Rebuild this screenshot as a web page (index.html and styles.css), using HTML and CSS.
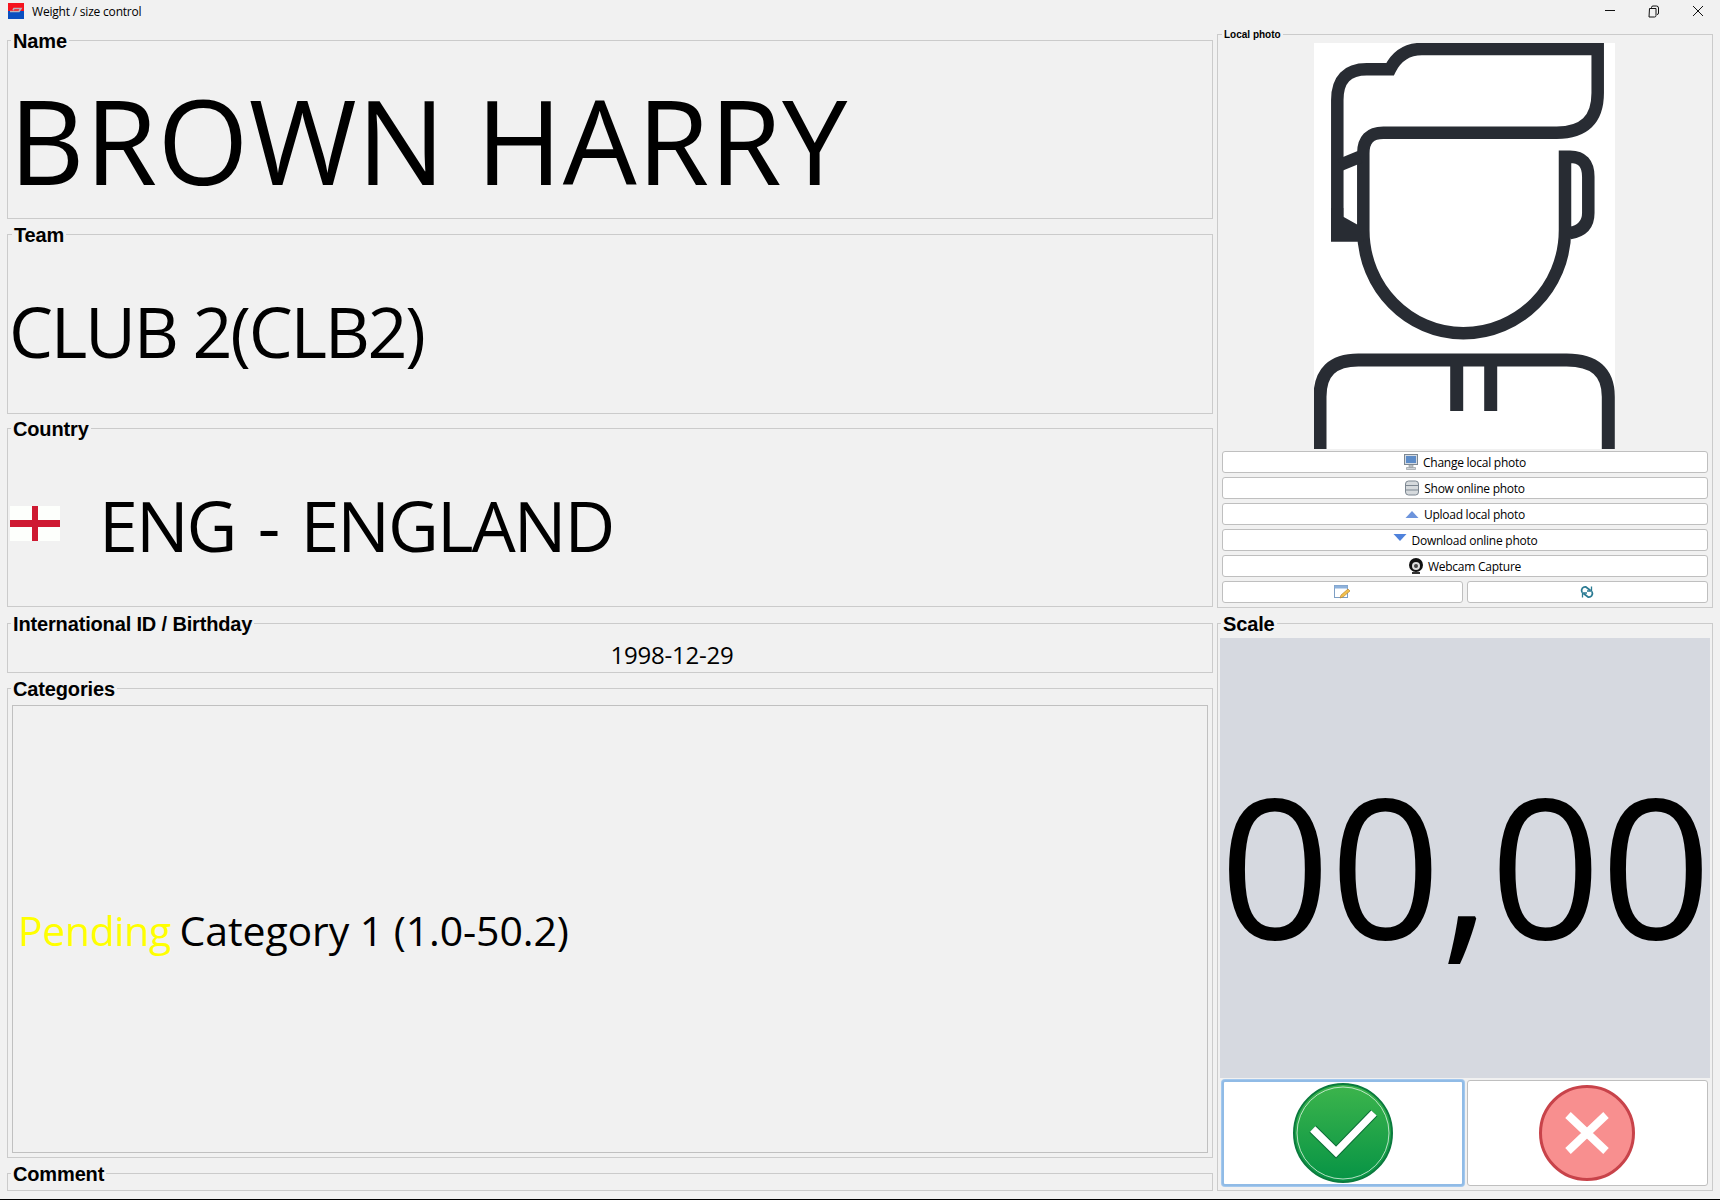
FILE: index.html
```html
<!DOCTYPE html>
<html lang="en">
<head>
    <meta charset="UTF-8" />
    <title>Weight / size control</title>
    <link rel="stylesheet" href="styles.css">
</head>
<body>
    <header class="title-bar">
        <svg class="app-icon" viewBox="0 0 16 16">
            <rect width="16" height="8" fill="#f5141e"/>
            <rect y="8" width="16" height="8" fill="#0b4fc0"/>
            <path d="M2 8.500h9l2-3H6L5 7" fill="none" stroke="#b9b4bd" stroke-width="1.600"/>
        </svg>
        <span class="title-text">Weight / size control</span>
        <div class="window-controls">
            <svg viewBox="0 0 44 30"><path d="M17 10.500h10" stroke="#111" fill="none"/></svg>
            <svg viewBox="0 0 44 30"><path d="M17.500 8.500h6.500v7a1.500 1.500 0 0 1-1.500 1.500h-5.500zM19.500 8.500v-1a1.500 1.500 0 0 1 1.500-1.500h3.500a2 2 0 0 1 2 2v5a1.500 1.500 0 0 1-1.500 1.500" stroke="#111" fill="none"/></svg>
            <svg viewBox="0 0 44 30"><path d="M17 6l10 10M27 6l-10 10" stroke="#111" fill="none"/></svg>
        </div>
    </header>

    <main class="content">
        <div class="left-column">
            <fieldset class="group group-name">
                <legend>Name</legend>
                <div class="big-name">BROWN HARRY</div>
            </fieldset>
            <fieldset class="group group-team">
                <legend class="team-legend">Team</legend>
                <div class="big-value team-value">CLUB 2(CLB2)</div>
            </fieldset>
            <fieldset class="group group-country">
                <legend>Country</legend>
                <svg class="flag" viewBox="0 0 50 35">
                    <rect width="50" height="35" fill="#fdfffc"/>
                    <rect x="22" width="6" height="35" fill="#ce1a32"/>
                    <rect y="14" width="50" height="7" fill="#ce1a32"/>
                </svg>
                <div class="big-value country-value">ENG - ENGLAND</div>
            </fieldset>
            <fieldset class="group group-birth">
                <legend>International ID / Birthday</legend>
                <div class="birth-date">1998-12-29</div>
            </fieldset>
            <fieldset class="group group-categories">
                <legend>Categories</legend>
                <div class="category-box">
                    <span class="pending">Pending</span>&nbsp;<span class="category-name">Category 1 (1.0-50.2)</span>
                </div>
            </fieldset>
            <fieldset class="group group-comment">
                <legend>Comment</legend>
            </fieldset>
        </div>

        <div class="right-column">
            <fieldset class="group group-photo">
                <legend class="small-legend">Local photo</legend>
                <svg class="photo" viewBox="0 0 301 406">
                    <rect width="301" height="406" fill="#fff"/>
                    <g fill="none" stroke="#282c33" stroke-width="12.500">
                        <path d="M23.300 198V57Q23.300 26.300 52.700 26.300H76Q86 6 108 6H283.700V50Q283.700 89.700 242.700 89.700H69.300Q49.300 89.700 49.300 110.300V187C49.300 245 95 290.300 149.300 290.300C205 290.300 251 245 251 187V113.700H256Q274.300 113.700 274.300 133.700V170Q274.300 187 256 190"/>
                        <path d="M26 122L46 113.700"/>
                        <path d="M6 406V353.700Q6 317 44.300 317H252.700Q294.300 317 294.300 353.700V406" stroke-width="13"/>
                        <path d="M142.700 317V368M176.700 317V368" stroke-width="13"/>
                    </g>
                    <path d="M17 198.700H50L44 182L29.300 173.700V165H17Z" fill="#282c33"/>
                </svg>
                <div class="photo-buttons">
                    <button class="btn">
                        <svg class="btn-icon" viewBox="0 0 14 16">
                            <rect x="0.500" y="0.500" width="13" height="10" fill="#d5dbe2" stroke="#7d8791"/>
                            <rect x="2" y="2" width="10" height="7" fill="#5d8cc8"/>
                            <path d="M5 11h4v2H5zM2.500 13.500h9v2h-9z" fill="#ced3d8" stroke="#8a9096" stroke-width=".6"/>
                        </svg>
                        Change local photo
                    </button>
                    <button class="btn">
                        <svg class="btn-icon" viewBox="0 0 14 16">
                            <rect x="0.500" y="1" width="13" height="14" rx="3" fill="#d6dadd" stroke="#7d8791"/>
                            <path d="M0.500 5.500h13M0.500 10h13" stroke="#7d8791"/>
                        </svg>
                        Show online photo
                    </button>
                    <button class="btn">
                        <svg class="btn-icon" viewBox="0 0 14 16"><path d="M0.500 12L7 5l6.500 7z" fill="#6d94dc"/></svg>
                        Upload local photo
                    </button>
                    <button class="btn">
                        <svg class="btn-icon btn-icon-high" viewBox="0 0 14 16"><path d="M0.500 4h13L7 11z" fill="#4f82dc"/></svg>
                        Download online photo
                    </button>
                    <button class="btn">
                        <svg class="btn-icon" viewBox="0 0 14 16">
                            <circle cx="7" cy="7" r="7" fill="#111"/>
                            <circle cx="7" cy="8" r="4" fill="#ddd"/>
                            <circle cx="7" cy="8" r="2" fill="#444"/>
                            <path d="M3 14h8v2H3z" fill="#333"/>
                        </svg>
                        Webcam Capture
                    </button>
                    <div class="btn-row">
                        <button class="btn">
                            <svg class="btn-icon" viewBox="0 0 16 16">
                                <rect x="0.500" y="1.500" width="13" height="12" fill="#fff" stroke="#7e9fc4"/>
                                <rect x="0.500" y="1.500" width="13" height="3" fill="#8eb2dc"/>
                                <path d="M6 14l1-3 7-6 2 2-7 6z" fill="#f2c04c" stroke="#b57d2a" stroke-width=".6"/>
                            </svg>
                        </button>
                        <button class="btn">
                            <svg class="btn-icon" viewBox="0 0 16 16" fill="none" stroke="#2a7a92" stroke-width="1.800">
                                <path d="M3 8.500C1.500 5 4 2.500 7 3l4.500 3.500M13 7.500c1.500 3.500-1 6-4 5.500L4.500 9.500"/>
                                <path d="M12.500 2.500V7H8M3.500 13.500V9H8" stroke-width="1.300"/>
                            </svg>
                        </button>
                    </div>
                </div>
            </fieldset>

            <fieldset class="group group-scale">
                <legend class="scale-legend">Scale</legend>
                <div class="scale-display">00,00</div>
                <div class="scale-buttons">
                    <button class="btn action-btn action-focus">
                        <svg class="action-icon" viewBox="0 0 100 100">
                            <defs>
                                <linearGradient id="okFill" x1="0" y1="0" x2="0" y2="1">
                                    <stop offset="0" stop-color="#3db54c"/>
                                    <stop offset="1" stop-color="#069345"/>
                                </linearGradient>
                            </defs>
                            <circle cx="50" cy="50" r="49" fill="url(#okFill)" stroke="#0b7a3e" stroke-width="2"/>
                            <circle cx="50" cy="50" r="46" fill="none" stroke="#dff2e3" stroke-width=".8"/>
                            <path d="M19.700 46L43 69L81 30" fill="none" stroke="#0c6f38" stroke-width="9.500"/>
                            <path d="M19.700 46L43 69L81 30" fill="none" stroke="#fff" stroke-width="7.500"/>
                        </svg>
                    </button>
                    <button class="btn action-btn">
                        <svg class="action-icon" viewBox="0 0 100 100">
                            <circle cx="50" cy="50" r="46.500" fill="#f88f8f" stroke="#c8434a" stroke-width="3"/>
                            <path d="M31 32L69 68M69 32L31 68" fill="none" stroke="#fff" stroke-width="8"/>
                        </svg>
                    </button>
                </div>
            </fieldset>
        </div>
    </main>
</body>
</html>
```

FILE: styles.css
```css
* {
    box-sizing: border-box;
}
body {
    margin: 0;
    height: 1200px;
    overflow: hidden;
    background: #f1f1f1;
    color: #000;
    font-family: 'Open Sans', 'Noto Sans', sans-serif;
    border-bottom: 1px solid #000;
}
.title-bar {
    display: flex;
    align-items: center;
    height: 29px;
    padding: 0 0 8px 8px;
    font-size: 12px;
}
.app-icon {
    width: 16px;
    height: 16px;
    margin-right: 8px;
}
.title-text {
    letter-spacing: -0.2px;
    margin-top: 2px;
}
.window-controls {
    display: flex;
    margin-left: auto;
}
.window-controls svg {
    width: 44px;
    height: 30px;
    margin-top: 8px;
}
.content {
    display: flex;
    gap: 4px;
    padding-left: 7px;
    padding-right: 7px;
    height: 1170px;
}
.left-column {
    width: 1206px;
    display: grid;
    grid-template-rows: 190px 191px 190px 61px 481px 29px;
    row-gap: 4px;
}
.right-column {
    width: 496px;
    display: flex;
    flex-direction: column;
}
.group {
    margin: 0;
    padding: 0;
    min-width: 0;
    border: 1px solid #cbcbcb;
    display: flex;
    align-items: center;
}
.group legend {
    margin-left: 3px;
    padding: 1px 2px 0;
    font-family: 'Liberation Sans', Arial, sans-serif;
    font-weight: bold;
    font-size: 20px;
    line-height: 22px;
    letter-spacing: -0.15px;
}
.group .team-legend {
    margin-left: 4px;
}
.group .scale-legend {
    margin-left: 1px;
}
.group .small-legend {
    margin-left: 0;
    padding: 0 2px;
    font-size: 10px;
    line-height: 11px;
    letter-spacing: 0;
}
.group-country {
    margin: -1px 0 1px;
}
.big-name {
    font-size: 117px;
    line-height: 1;
    padding: 8px 0 0 1px;
    letter-spacing: 0.3px;
}
.big-value {
    font-size: 70px;
    line-height: 1;
    padding-left: 2px;
    padding-top: 3px;
}
.team-value {
    padding-left: 1px;
    letter-spacing: -2.300px;
}
.country-value {
    letter-spacing: -2px;
    word-spacing: 6px;
}
.flag {
    width: 50px;
    height: 35px;
    margin-left: 2px;
    margin-right: 37px;
}
.birth-date {
    width: 100%;
    text-align: center;
    font-size: 24px;
    letter-spacing: -0.2px;
    padding-left: 124px;
    margin-bottom: 1px;
}
.group-birth {
    align-items: flex-end;
}
.group-categories {
    padding-top: 1px;
}
.category-box {
    flex: 1;
    height: 448px;
    margin: 0 4px;
    border: 1px solid #c0c0c0;
    display: flex;
    align-items: center;
    padding: 2px 0 0 5px;
    font-size: 41px;
}
.pending {
    color: #ffff00;
    letter-spacing: -0.4px;
}
.category-name {
    margin-left: -2px;
    letter-spacing: -0.1px;
}
.group-photo {
    height: 579px;
    flex-direction: column;
    align-items: stretch;
    padding: 3px 4px 3px;
}
.photo {
    display: block;
    width: 301px;
    height: 406px;
    align-self: center;
    margin-left: -2px;
    flex: none;
}
.photo-buttons {
    margin-top: 2px;
    display: flex;
    flex-direction: column;
    gap: 4px;
}
.btn {
    height: 22px;
    padding: 0;
    display: flex;
    align-items: center;
    justify-content: center;
    gap: 5px;
    background: #fff;
    border: 1px solid #bfbfbf;
    border-radius: 3px;
    font-family: inherit;
    font-size: 12px;
    letter-spacing: -0.25px;
    color: #000;
}
.btn-icon {
    width: 14px;
    height: 16px;
    flex: none;
}
.btn-row .btn-icon {
    width: 16px;
    margin-left: -2px;
}
.btn-icon-high {
    margin-top: -5px;
}
.btn-row {
    display: grid;
    grid-template-columns: 1fr 1fr;
    gap: 4px;
}
.group-scale {
    margin-top: 4px;
    height: 579px;
    flex-direction: column;
    align-items: stretch;
    padding: 3px 2px 4px;
}
.scale-display {
    height: 440px;
    flex: none;
    display: flex;
    align-items: center;
    justify-content: center;
    background: #d6d9e0;
    font-size: 195px;
    letter-spacing: -1px;
    line-height: 1;
    padding-top: 10px;
}
.scale-buttons {
    display: grid;
    grid-template-columns: 1fr 1fr;
    gap: 3px;
    margin: 2px 2px 0;
}
.action-btn {
    height: 106px;
}
.action-focus {
    border: 2px solid #90bbe6;
    box-shadow: 0 0 0 1px #a3c8ee;
}
.action-icon {
    width: 100px;
    height: 100px;
}
```
